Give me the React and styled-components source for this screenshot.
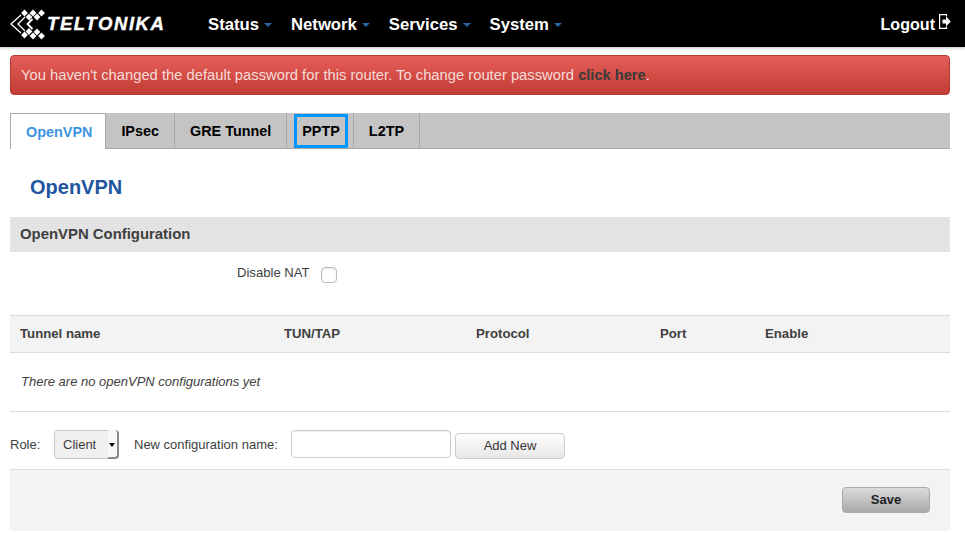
import styled, { createGlobalStyle } from "styled-components"

const GlobalStyle = createGlobalStyle`
  html, body {
    margin: 0;
    padding: 0;
    background: #fff;
    font-family: "Liberation Sans", Arial, sans-serif;
    font-size: 13px;
    color: #404040;
  }
`

function LogoMark() {
  const diamonds = [
    [24.5, 11], [33, 11], [41.5, 11],
    [29, 15], [37, 15],
    [29, 29.5], [37, 30],
    [24.5, 33], [33, 34], [41.5, 34],
  ]
  return (
    <svg width="40" height="34" viewBox="8 5 40 34" style={{ flex: "none" }}>
      {diamonds.map(([x, y], i) => (
        <path key={i} d={`M${x} ${y - 3.4}L${x + 3.4} ${y}L${x} ${y + 3.4}L${x - 3.4} ${y}Z`} fill="#fff" />
      ))}
      <path d="M21 13L11 22L21 31" fill="none" stroke="#fff" strokeWidth="1.3" />
      <path d="M25 15L18 22L25 29" fill="none" stroke="#fff" strokeWidth="1.3" />
      <path d="M32.5 17L27.5 22L32.5 27" fill="none" stroke="#fff" strokeWidth="1.8" />
    </svg>
  )
}

function LogoutIcon() {
  return (
    <svg width="12" height="15" viewBox="0 0 12 15">
      <path d="M7.5 2.5V.6H.6V14.4H7.5V12.5" fill="none" stroke="#fff" strokeWidth="1.2" />
      <path d="M3.5 5.5H7V2.5L11.8 7.5L7 12.5V9.5H3.5Z" fill="#fff" />
    </svg>
  )
}

const menu = ["Status", "Network", "Services", "System"]
const tabs = ["OpenVPN", "IPsec", "GRE Tunnel", "PPTP", "L2TP"]
const columns = ["Tunnel name", "TUN/TAP", "Protocol", "Port", "Enable"]

function App() {
  return (
    <>
      <GlobalStyle />
      <NavBar>
        <Brand>
          <LogoMark />
          <BrandName>TELTONIKA</BrandName>
        </Brand>
        <Menu>
          {menu.map((item) => (
            <MenuItem key={item}>
              {item}
              <Caret />
            </MenuItem>
          ))}
        </Menu>
        <Logout>
          Logout
          <LogoutIcon />
        </Logout>
      </NavBar>

      <Page>
        <Alert>
          You haven't changed the default password for this router. To change router password{" "}
          <AlertLink>click here</AlertLink>.
        </Alert>

        <TabBar>
          {tabs.map((tab) => (
            <Tab key={tab} $active={tab === "OpenVPN"} $marked={tab === "PPTP"}>
              {tab === "PPTP" ? <Highlight>{tab}</Highlight> : tab}
            </Tab>
          ))}
        </TabBar>

        <Heading>OpenVPN</Heading>
        <SectionTitle>OpenVPN Configuration</SectionTitle>

        <OptionRow>
          <OptionLabel>Disable NAT</OptionLabel>
          <Checkbox />
        </OptionRow>

        <TableHead>
          {columns.map((col) => (
            <span key={col}>{col}</span>
          ))}
        </TableHead>
        <EmptyRow>There are no openVPN configurations yet</EmptyRow>

        <AddRow>
          <AddLabel>Role:</AddLabel>
          <RoleSelect>
            Client
            <SelectHandle />
          </RoleSelect>
          <NameLabel>New configuration name:</NameLabel>
          <NameInput />
          <AddButton>Add New</AddButton>
        </AddRow>

        <Footer>
          <SaveButton>Save</SaveButton>
        </Footer>
      </Page>
    </>
  )
}

const NavBar = styled.header`
  height: 47px;
  background: #000;
  display: flex;
  align-items: center;
  box-shadow: 0 1px 3px rgba(0, 0, 0, 0.25);
`
const Brand = styled.div`
  display: flex;
  align-items: center;
  width: 208px;
  padding-left: 8px;
  box-sizing: border-box;
  height: 100%;
`
const BrandName = styled.span`
  margin-left: -1px;
  margin-top: 1px;
  color: #fff;
  font-size: 18.5px;
  font-weight: 700;
  font-style: italic;
  letter-spacing: 1.6px;
  -webkit-text-stroke: 0.4px #fff;
`
const Menu = styled.nav`
  display: flex;
  gap: 19px;
  padding-top: 2px;
`
const MenuItem = styled.span`
  display: flex;
  align-items: center;
  color: #fff;
  font-size: 16.7px;
  font-weight: 700;
`
const Caret = styled.i`
  width: 0;
  height: 0;
  margin: 1px 0 0 5px;
  border-left: 4px solid transparent;
  border-right: 4px solid transparent;
  border-top: 4px solid #2b66a6;
`
const Logout = styled.div`
  margin-left: auto;
  margin-right: 14px;
  padding-top: 2px;
  display: flex;
  align-items: flex-start;
  gap: 4px;
  color: #fff;
  font-size: 16.1px;
  font-weight: 700;
  svg {
    margin-top: -1px;
  }
`
const Page = styled.main`
  padding: 8px 15px 0 10px;
`
const Alert = styled.div`
  height: 40px;
  box-sizing: border-box;
  padding-left: 10px;
  line-height: 38px;
  font-size: 14.75px;
  color: #f6dcd8;
  background: linear-gradient(#e65e5a, #c13c34);
  border: 1px solid #b73a34;
  border-radius: 4px;
  white-space: nowrap;
`
const AlertLink = styled.span`
  font-size: 14.65px;
  font-weight: 700;
  color: #3a3a3a;
`
const TabBar = styled.div`
  display: flex;
  height: 36px;
  margin-top: 18px;
  background: #c4c4c4;
  border-bottom: 1px solid #a8a8a8;
  box-sizing: border-box;
`
const Tab = styled.div`
  display: flex;
  align-items: center;
  padding: ${(p) => (p.$marked ? "0 5px 0 7px" : p.$active ? "0 13px 0 15px" : "0 15px")};
  font-size: 14.4px;
  font-weight: 700;
  color: ${(p) => (p.$active ? "#3d94e0" : "#000")};
  background: ${(p) => (p.$active ? "#fff" : "transparent")};
  border-right: 1px solid #a8a8a8;
  border-top: ${(p) => (p.$active ? "1px solid #a8a8a8" : "none")};
  border-left: ${(p) => (p.$active ? "1px solid #a8a8a8" : "none")};
  height: ${(p) => (p.$active ? "36px" : "auto")};
  box-sizing: border-box;
`
const Highlight = styled.b`
  display: block;
  padding: 0 5px;
  height: 34px;
  line-height: 28px;
  box-sizing: border-box;
  border: 3px solid #0096ff;
`
const Heading = styled.h1`
  margin: 26px 0 0 20px;
  height: 42px;
  line-height: 25px;
  font-size: 20px;
  font-weight: 700;
  color: #21569f;
`
const SectionTitle = styled.div`
  height: 35px;
  line-height: 34px;
  padding-left: 10px;
  background: #e3e3e3;
  font-size: 14.9px;
  font-weight: 700;
  color: #404040;
`
const OptionRow = styled.div`
  display: flex;
  height: 63px;
  padding-left: 227px;
  box-sizing: border-box;
  padding-top: 13px;
`
const OptionLabel = styled.label`
  width: 84px;
  font-size: 13.1px;
  line-height: 15px;
`
const Checkbox = styled.span`
  width: 14px;
  height: 14px;
  margin-top: 2px;
  border: 1px solid #bbb;
  border-radius: 4px;
  box-shadow: inset 0 1px 2px rgba(0, 0, 0, 0.1);
`
const TableHead = styled.div`
  display: grid;
  grid-template-columns: 264px 192px 184px 105px 1fr;
  height: 38px;
  box-sizing: border-box;
  padding: 0 0 2px 10px;
  align-items: center;
  background: #f3f3f3;
  border-top: 1px solid #ddd;
  border-bottom: 1px solid #ddd;
  font-weight: 700;
  font-size: 13.2px;
`
const EmptyRow = styled.div`
  height: 59px;
  box-sizing: border-box;
  padding-left: 11px;
  line-height: 58px;
  border-bottom: 1px solid #ddd;
  font-style: italic;
  font-size: 13px;
`
const AddRow = styled.div`
  display: flex;
  align-items: flex-start;
  height: 57px;
  padding-top: 18px;
  box-sizing: border-box;
  font-size: 13px;
`
const AddLabel = styled.label`
  width: 44px;
  line-height: 29px;
`
const RoleSelect = styled.div`
  position: relative;
  width: 65px;
  height: 29px;
  box-sizing: border-box;
  padding-left: 8px;
  line-height: 27px;
  background: #f1f0ee;
  border: 1px solid #c8c8c8;
  border-radius: 4px;
`
const SelectHandle = styled.i`
  position: absolute;
  right: -1px;
  top: -1px;
  bottom: -1px;
  width: 9px;
  background: #f8f8f8;
  border-right: 2px solid #8a8a8a;
  border-bottom: 2px solid #8a8a8a;
  border-radius: 0 4px 4px 0;
  &::after {
    content: "";
    position: absolute;
    left: 1px;
    top: 13px;
    border-left: 3px solid transparent;
    border-right: 3px solid transparent;
    border-top: 4px solid #000;
  }
`
const NameLabel = styled.label`
  margin-left: 15px;
  width: 157px;
  line-height: 29px;
`
const NameInput = styled.span`
  width: 160px;
  height: 28px;
  box-sizing: border-box;
  border: 1px solid #ccc;
  border-radius: 4px;
  box-shadow: inset 0 1px 1px rgba(0, 0, 0, 0.06);
`
const AddButton = styled.button`
  width: 110px;
  height: 26px;
  margin: 3px 0 0 4px;
  padding: 0 0 2px;
  font: 13px "Liberation Sans", Arial, sans-serif;
  color: #333;
  background: linear-gradient(#fff, #e6e6e6);
  border: 1px solid #ccc;
  border-radius: 4px;
`
const Footer = styled.div`
  display: flex;
  justify-content: flex-end;
  height: 62px;
  box-sizing: border-box;
  padding: 17px 20px 0 0;
  background: #f3f3f3;
  border-top: 1px solid #ddd;
  border-radius: 0 0 4px 4px;
`
const SaveButton = styled.button`
  width: 88px;
  height: 26px;
  padding: 0 0 1px;
  font: 700 13px "Liberation Sans", Arial, sans-serif;
  color: #222;
  background: linear-gradient(#dcdcdc, #a8a8a8);
  border: 1px solid #aaa;
  border-radius: 4px;
`

export default App
